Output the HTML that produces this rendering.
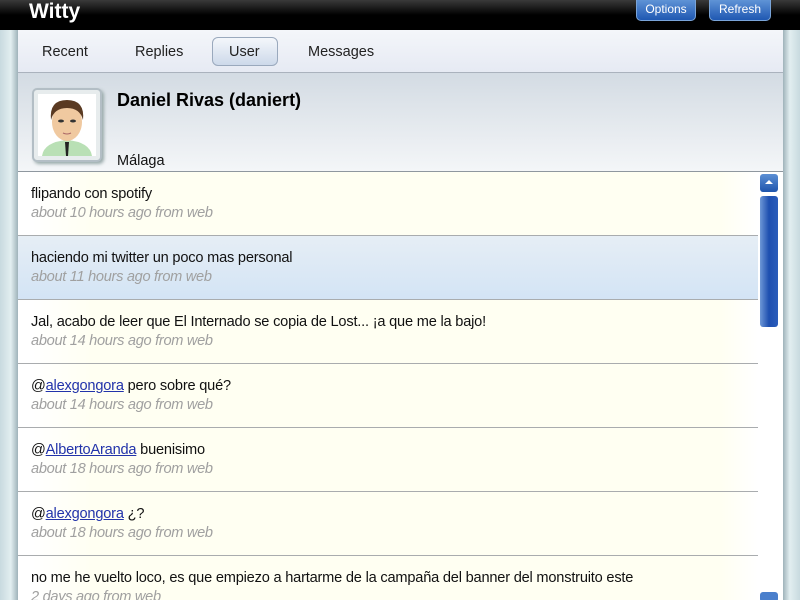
<!DOCTYPE html>
<html><head><meta charset="utf-8"><style>
*{margin:0;padding:0;box-sizing:border-box}
html,body{width:800px;height:600px;overflow:hidden}
body{background:#d9e6ea;font-family:"Liberation Sans",sans-serif;position:relative}
.frameL{position:absolute;left:0;top:0;width:18px;height:600px;background:linear-gradient(90deg,#c8dadf,#e2eef0 60%,#9fb3ba)}
.frameR{position:absolute;right:0;top:0;width:17px;height:600px;background:linear-gradient(90deg,#9fb3ba,#e2eef0 40%,#c8dadf)}
.title{position:absolute;left:0;top:0;width:800px;height:30px;background:linear-gradient(#3a3a3a,#000 50%,#000)}
.title h1{position:absolute;left:29px;top:0;color:#fff;font-size:21px;font-weight:bold;line-height:24px}
.btn{position:absolute;top:0;height:21px;border:1px solid #7aa4d8;border-top:none;border-radius:0 0 5px 5px;background:linear-gradient(#5f93d6,#1f58b2);color:#fff;font-size:12px;text-align:center;line-height:19px}
.tabs{position:absolute;left:18px;top:30px;width:765px;height:43px;background:linear-gradient(#f4f6fa,#e6eaf3);border-bottom:1px solid #aab2bd}
.tab{position:absolute;top:22px;font-size:14.5px;color:#222;transform:translateY(-50%)}
.tabsel{position:absolute;left:194px;top:7px;width:66px;height:29px;border:1px solid #9aa9bd;border-radius:6px;background:linear-gradient(#f4f7fb,#cdd9ea)}
.prof{position:absolute;left:18px;top:73px;width:765px;height:99px;background:linear-gradient(#d3dbe3,#f4f6f8);border-bottom:1px solid #8f979f}
.av{position:absolute;left:14px;top:15px;width:70px;height:74px;border:2px solid #b3bec5;border-radius:5px;background:#e7eced;box-shadow:2px 2px 3px #9aa}
.list{position:absolute;left:18px;top:172px;width:765px;height:428px;background:#fff;overflow:hidden}
.item{position:absolute;left:0;width:740px;height:64px;border-bottom:1px solid #a9acae;background:linear-gradient(90deg,#fff 2%,#fffff2 10%,#fffff2 95%,#fff)}
.item.sel{background:linear-gradient(#e6eef5,#d3e4f5);}
.t{position:absolute;left:13px;top:14px;font-size:14.6px;color:#111;white-space:nowrap;letter-spacing:-0.2px}
.m{position:absolute;left:13px;top:33px;font-size:14.6px;color:#a0a0a0;font-style:italic;white-space:nowrap;letter-spacing:-0.3px}
a{color:#2233aa;text-decoration:underline}
.sb{position:absolute;left:742px;top:0;width:20px;height:428px}
</style></head><body>
<div class="frameL"></div><div class="frameR"></div>
<div class="title"><h1>Witty</h1>
<div class="btn" style="left:636px;width:60px">Options</div>
<div class="btn" style="left:709px;width:62px">Refresh</div></div>
<div class="tabs"><div class="tabsel"></div>
<span class="tab" style="left:24px">Recent</span>
<span class="tab" style="left:117px">Replies</span>
<span class="tab" style="left:211px">User</span>
<span class="tab" style="left:290px">Messages</span></div>
<div class="prof">
<div class="av"><svg width="66" height="70" viewBox="0 0 66 70">
<rect x="4" y="4" width="58" height="62" fill="#fff"/>
<path d="M8 66 Q10 52 33 50 Q56 52 58 66Z" fill="#b9e0b5"/>
<path d="M31 52 L35 52 L34 66 L32 66Z" fill="#222"/>
<ellipse cx="33" cy="32" rx="15" ry="19" fill="#f0c9a0"/>
<path d="M17 30 Q15 10 33 10 Q51 10 49 30 Q46 18 33 18 Q20 18 17 30Z" fill="#5a3a22"/>
<ellipse cx="27" cy="31" rx="3" ry="1.5" fill="#333"/><ellipse cx="39" cy="31" rx="3" ry="1.5" fill="#333"/>
<path d="M29 43 Q33 45 37 43" stroke="#a66" fill="none"/></svg></div>
<div style="position:absolute;left:99px;top:17px;font-size:18px;font-weight:bold;color:#000">Daniel Rivas (daniert)</div>
<div style="position:absolute;left:99px;top:80px;font-size:14.5px;color:#111">Málaga</div>
</div>
<div class="list">
<div class="item" style="top:0"><div class="t">flipando con spotify</div><div class="m">about 10 hours ago from web</div></div>
<div class="item sel" style="top:64px"><div class="t">haciendo mi twitter un poco mas personal</div><div class="m">about 11 hours ago from web</div></div>
<div class="item" style="top:128px"><div class="t">Jal, acabo de leer que El Internado se copia de Lost... ¡a que me la bajo!</div><div class="m">about 14 hours ago from web</div></div>
<div class="item" style="top:192px"><div class="t">@<a>alexgongora</a> pero sobre qué?</div><div class="m">about 14 hours ago from web</div></div>
<div class="item" style="top:256px"><div class="t">@<a>AlbertoAranda</a> buenisimo</div><div class="m">about 18 hours ago from web</div></div>
<div class="item" style="top:320px"><div class="t">@<a>alexgongora</a> ¿?</div><div class="m">about 18 hours ago from web</div></div>
<div class="item" style="top:384px"><div class="t">no me he vuelto loco, es que empiezo a hartarme de la campaña del banner del monstruito este</div><div class="m">2 days ago from web</div></div>
<div class="sb">
<div style="position:absolute;left:0;top:2px;width:18px;height:18px;border-radius:3px;background:linear-gradient(#5b8fd4,#1f55ad)"><div style="position:absolute;left:5px;top:6px;width:0;height:0;border-left:4px solid transparent;border-right:4px solid transparent;border-bottom:4px solid #fff"></div></div>
<div style="position:absolute;left:0;top:24px;width:18px;height:131px;border-radius:3px;background:linear-gradient(90deg,#6d97d6,#1e4fb0 50%,#2a5dbb)"></div>
<div style="position:absolute;left:0;top:420px;width:18px;height:10px;border-radius:3px;background:#4a7fcc"></div>
</div>
</div>
</body></html>
